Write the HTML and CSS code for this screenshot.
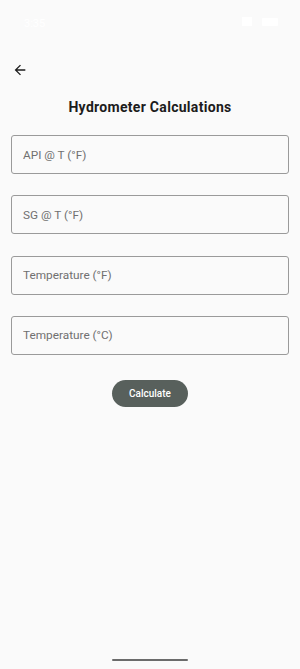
FILE: index.html
```html
<!DOCTYPE html>
<html lang="en">
<head>
  <meta charset="UTF-8">
  <meta name="viewport" content="width=device-width, initial-scale=1.0">
  <title>Hydrometer Calculations</title>
  <link rel="stylesheet" href="styles.css">
</head>
<body>
  <div class="status-bar">
    <span class="clock">3:35</span>
    <span class="status-icons">
      <span class="signal"></span>
      <span class="battery"></span>
    </span>
  </div>

  <div class="toolbar">
    <button class="back-button" aria-label="Back">
      <svg width="16" height="16" viewBox="0 0 24 24">
        <path d="M20 11H7.83l5.59-5.59L12 4l-8 8 8 8 1.41-1.41L7.83 13H20v-2z" fill="#1c1c1c"/>
      </svg>
    </button>
  </div>

  <h1 class="title">Hydrometer Calculations</h1>

  <div class="form">
    <input type="text" class="field" placeholder="API @ T (°F)">
    <input type="text" class="field" placeholder="SG @ T (°F)">
    <input type="text" class="field" placeholder="Temperature (°F)">
    <input type="text" class="field" placeholder="Temperature (°C)">
    <button class="calc-button">Calculate</button>
  </div>

  <div class="home-bar"></div>
</body>
</html>
```

FILE: styles.css
```css
body {
  margin: 0;
  height: 669px;
  font-family: Roboto, 'Noto Sans', sans-serif;
  background-color: #fafafa;
  color: #1c1c1c;
  display: flex;
  flex-direction: column;
  overflow: hidden;
}
.status-bar {
  height: 54px;
  padding: 17px 22px 0 24px;
  display: flex;
  justify-content: space-between;
  align-items: flex-start;
  box-sizing: border-box;
  color: #ffffff;
  font-size: 11px;
}
.status-icons {
  display: flex;
  gap: 10px;
  align-items: center;
}
.signal {
  width: 10px;
  height: 9px;
  background-color: #ffffff;
}
.battery {
  width: 16px;
  height: 8px;
  background-color: #ffffff;
  border-radius: 1px;
}
.toolbar {
  height: 32px;
  padding-left: 12px;
  display: flex;
  align-items: center;
}
.back-button {
  background: none;
  border: none;
  padding: 0;
  width: 16px;
  height: 16px;
  display: flex;
}
.title {
  margin: 11px 0 0;
  text-align: center;
  font-size: 14px;
  line-height: 20px;
  font-weight: 700;
  letter-spacing: 0.3px;
}
.form {
  padding: 18px 11px 0;
  display: flex;
  flex-direction: column;
  gap: 21.33px;
}
.field {
  height: 39px;
  box-sizing: border-box;
  border: 1px solid #9a9a9a;
  border-radius: 3px;
  background: transparent;
  padding: 0 11px;
  font-family: Roboto, 'Noto Sans', sans-serif;
  font-size: 11.8px;
  color: #333;
}
.field::placeholder {
  color: #707070;
}
.calc-button {
  align-self: center;
  margin-top: 4px;
  width: 76px;
  height: 27px;
  border: none;
  border-radius: 14px;
  background-color: #58605c;
  color: #ffffff;
  font-family: Roboto, 'Noto Sans', sans-serif;
  font-size: 10px;
  font-weight: 500;
}
.home-bar {
  margin: auto auto 8px;
  width: 76px;
  height: 2px;
  border-radius: 1px;
  background-color: #6b6b6b;
}
```
